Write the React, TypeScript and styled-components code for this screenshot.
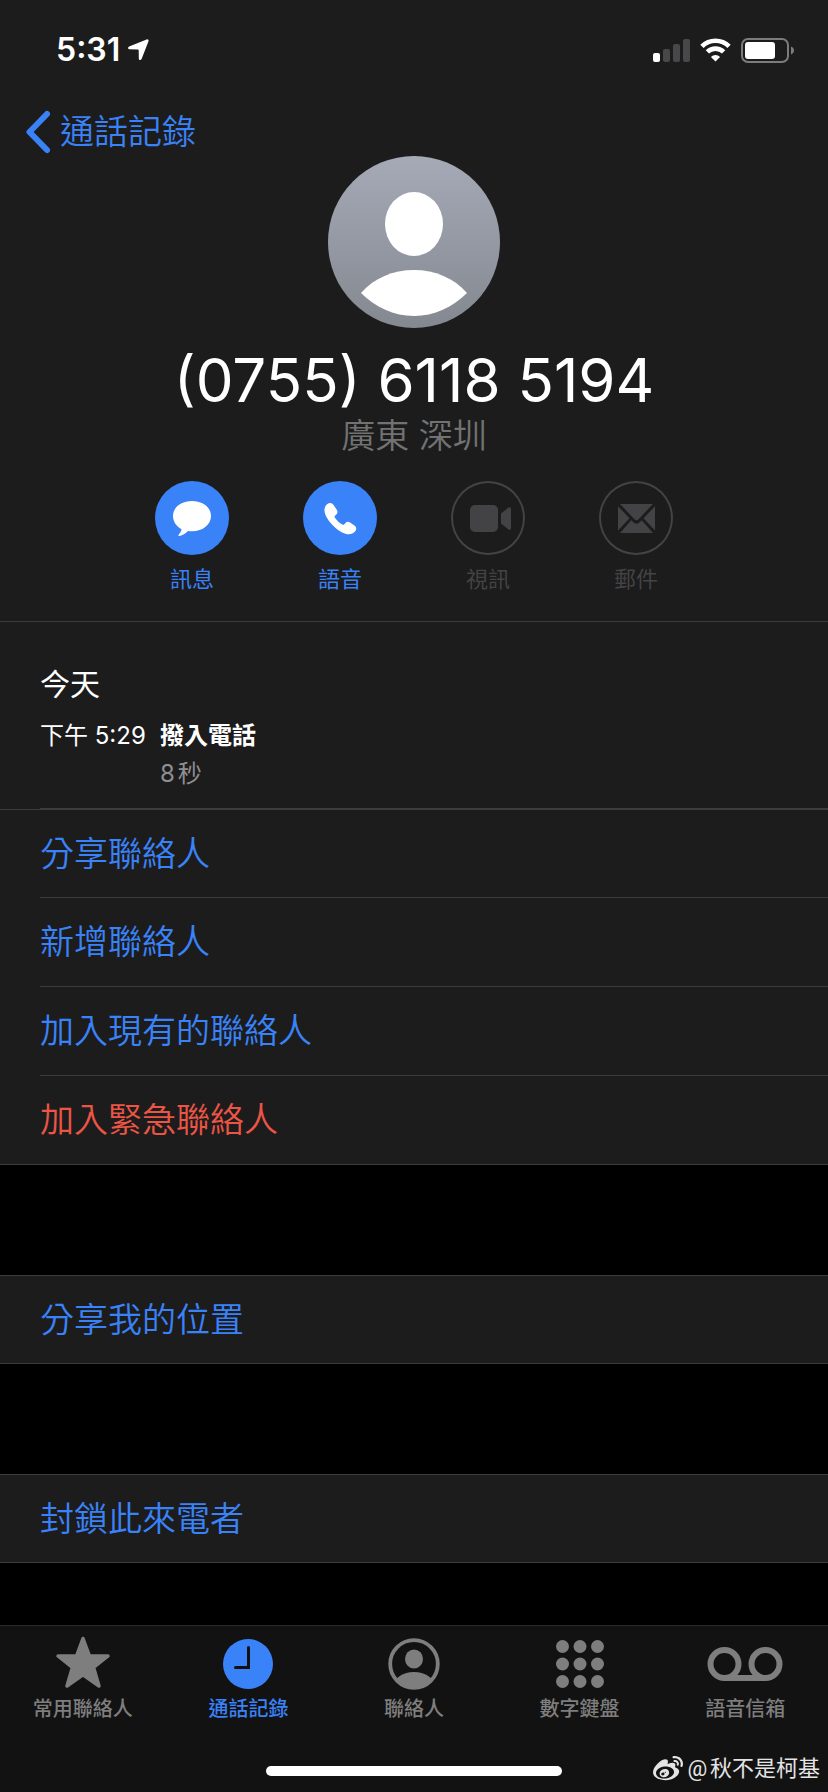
import React from "react";
import styled, { createGlobalStyle } from "styled-components";
import { FaWeibo } from "react-icons/fa";

const color = {
  panel: "#1c1c1c",
  bar: "#121212",
  line: "#3c3c3e",
  blue: "#3a82f7",
  red: "#eb5545",
  grey: "#727272",
  tab: "#7e7e7e",
  disabled: "#434345",
};

const GlobalStyle = createGlobalStyle`
  *, *::before, *::after { box-sizing: border-box; }
  body {
    margin: 0;
    background: #000;
    color: #fff;
    font-family: Inter, "Noto Sans CJK TC", sans-serif;
    text-autospace: normal;
  }
  button { font: inherit; color: inherit; background: none; border: 0; padding: 0; cursor: pointer; }
  button:disabled { cursor: default; }
  a { color: inherit; text-decoration: none; }
  h1, h2, p { margin: 0; font-weight: 400; }
  svg { display: block; flex: none; overflow: visible; }
`;

const Screen = styled.div`
  display: flex;
  flex-direction: column;
  min-height: 100vh;
`;

const Header = styled.header`
  background: ${color.panel};
  border-bottom: 1px solid ${color.line};
`;

const StatusBar = styled.div`
  display: flex;
  align-items: center;
  justify-content: space-between;
  height: 100px;
  padding: 0 34px 0 56px;
`;

const Clock = styled.div`
  display: flex;
  align-items: center;
  gap: 8px;
  font-size: 32px;
  font-weight: 600;
  line-height: 40px;
`;

const StatusIcons = styled.div`
  display: flex;
  align-items: center;
  gap: 10px;
`;

const NavBar = styled.nav`
  display: flex;
  height: 56px;
  padding-left: 26px;
`;

const BackLink = styled.a`
  display: flex;
  align-items: center;
  gap: 10px;
  height: 64px;
  color: ${color.blue};
  font-size: 34px;
  font-weight: 350;
  line-height: 48px;
`;

const Profile = styled.section`
  display: flex;
  flex-direction: column;
  align-items: center;
  padding-bottom: 26px;
`;

const PhoneNumber = styled.h1`
  margin-top: 16px;
  font-size: 60px;
  line-height: 72px;
`;

const Region = styled.p`
  color: ${color.grey};
  font-size: 34px;
  font-weight: 350;
  line-height: 40px;
`;

const Actions = styled.div`
  display: flex;
  gap: 74px;
  margin-top: 25px;
`;

const ActionButton = styled.button`
  display: flex;
  flex-direction: column;
  align-items: center;
  gap: 8px;
  width: 74px;
  color: ${color.blue};
  font-size: 22px;
  line-height: 32px;
  &:disabled { color: ${color.disabled}; }
`;

const Disc = styled.span<{ $outlined?: boolean }>`
  width: 74px;
  height: 74px;
  border-radius: 50%;
  color: ${(p) => (p.$outlined ? color.disabled : "#fff")};
  background: ${(p) => (p.$outlined ? "transparent" : color.blue)};
  box-shadow: ${(p) => (p.$outlined ? `inset 0 0 0 2px ${color.disabled}` : "none")};
`;

const History = styled.section`
  padding-left: 40px;
  background: ${color.panel};
`;

const HistoryBody = styled.div`
  padding: 40px 0 16px;
  border-bottom: 1px solid ${color.line};
`;

const Day = styled.h2`
  font-size: 30px;
  line-height: 44px;
`;

const CallEntry = styled.div`
  display: grid;
  grid-template-columns: 120px 1fr;
  row-gap: 2px;
  margin-top: 12px;
  font-size: 24px;
  line-height: 36px;
`;

const CallKind = styled.strong`
  font-weight: 600;
`;

const Duration = styled.span`
  grid-column: 2;
  color: #8e8e93;
`;

const Group = styled.ul<{ $spaced?: boolean }>`
  list-style: none;
  margin: ${(p) => (p.$spaced ? "110px 0 0" : "0")};
  padding: 0;
  background: ${color.panel};
  border: solid ${color.line};
  border-width: 1px 0;
`;

const ItemButton = styled.button<{ $danger?: boolean }>`
  display: block;
  width: 100%;
  height: 87px;
  color: ${(p) => (p.$danger ? color.red : color.blue)};
  font-size: 34px;
  font-weight: 350;
  line-height: 48px;
  text-align: left;
`;

const Item = styled.li`
  padding-left: 40px;

  & + & ${ItemButton} {
    height: 89px;
    border-top: 1px solid ${color.line};
  }
`;

const Footer = styled.footer`
  position: sticky;
  bottom: 0;
  margin-top: auto;
  background: ${color.bar};
  border-top: 1px solid #2a2a2a;
`;

const Tabs = styled.nav`
  display: grid;
  grid-template-columns: repeat(5, 1fr);
  height: 140px;
  padding-top: 11px;
`;

const Tab = styled.a<{ $active?: boolean }>`
  display: flex;
  flex-direction: column;
  align-items: center;
  gap: 6px;
  height: 90px;
  color: ${(p) => (p.$active ? color.blue : color.tab)};
  font-size: 20px;
  font-weight: 500;
  line-height: 28px;
`;

const HomeIndicator = styled.div`
  width: 296px;
  height: 10px;
  margin: 0 auto 16px;
  border-radius: 5px;
  background: #fff;
`;

const Watermark = styled.div`
  position: absolute;
  right: 8px;
  bottom: 8px;
  display: flex;
  align-items: center;
  gap: 4px;
  color: #e4e4e4;
  font-size: 22px;
  line-height: 30px;
  font-family: Roboto, "Noto Sans CJK SC", sans-serif;
`;

const LocationArrow = () => (
  <svg width="21" height="22" viewBox="0 0 21 22" fill="currentColor">
    <path d="M18.600.400C20 .100 20.900 1 20.500 2.300L13.600 20C13 21.600 10.900 21.400 10.800 19.800L10.700 11.200C10.700 10.700 10.400 10.400 9.900 10.400L1.400 10.200C-.200 10.100-.400 8 1.100 7.400Z" />
  </svg>
);

const Signal = () => (
  <svg width="37" height="23" viewBox="0 0 37 23">
    <rect x="0" y="14" width="7" height="9" rx="2" fill="#fff" />
    <rect x="10" y="10" width="7" height="13" rx="2" fill="#48484a" />
    <rect x="20" y="5" width="7" height="18" rx="2" fill="#48484a" />
    <rect x="30" y="0" width="7" height="23" rx="2" fill="#48484a" />
  </svg>
);

const Wifi = () => (
  <svg width="31" height="24" viewBox="0 0 32 24">
    <g fill="none" stroke="#fff" strokeWidth="4.800">
      <path d="M2 8.200A20 20 0 0 1 30 8.200" />
      <path d="M7.600 14A12 12 0 0 1 24.400 14" />
    </g>
    <path d="M16 23.800L11.300 19.200A6.700 6.700 0 0 1 20.700 19.200Z" fill="#fff" />
  </svg>
);

const Battery = () => (
  <svg width="53" height="25" viewBox="0 0 53 25">
    <rect x="1" y="1" width="46" height="23" rx="6" fill="none" stroke="#7c7c7e" strokeWidth="2" />
    <rect x="4" y="4" width="30" height="17" rx="3" fill="#fff" />
    <path d="M50 8.500C52 9.300 53 10.700 53 12.500S52 15.700 50 16.500Z" fill="#7c7c7e" />
  </svg>
);

const BackChevron = () => (
  <svg width="24" height="42" viewBox="0 0 24 42">
    <path d="M21 3L3.500 21L21 39" fill="none" stroke="currentColor" strokeWidth="6" strokeLinecap="round" strokeLinejoin="round" />
  </svg>
);

const Avatar = () => (
  <svg width="172" height="172" viewBox="0 0 172 172" role="img" aria-label="聯絡人頭像">
    <defs>
      <linearGradient id="avatar" x1="0" y1="0" x2="0" y2="1">
        <stop offset="0" stopColor="#a6aab7" />
        <stop offset="1" stopColor="#848890" />
      </linearGradient>
    </defs>
    <circle cx="86" cy="86" r="86" fill="url(#avatar)" />
    <ellipse cx="86" cy="68" rx="29" ry="32" fill="#fff" />
    <path d="M33 137C46 122 65 114 86 114S126 122 139 137C125 151 106 160 86 160S47 151 33 137Z" fill="#fff" />
  </svg>
);

const MessageIcon = () => (
  <svg width="74" height="74" viewBox="0 0 74 74" fill="currentColor">
    <path d="M37 20C48 20 56 26.500 56 35S48 50.300 37 50.300C35.500 50.300 34.300 50.300 33 50C30.500 52.500 27.500 54.500 24.500 55C23.300 55.200 23 54.200 23.800 53.400C25.300 51.900 26.200 50.200 26.500 48.200C21.500 45.400 18 40.800 18 35C18 26.500 26 20 37 20Z" />
  </svg>
);

const PhoneIcon = () => (
  <svg width="74" height="74" viewBox="0 0 74 74" fill="currentColor">
    <path d="M24 23.200C26.500 21.200 29 21.500 30.600 24L33.800 28.800C34.900 30.800 34.700 32.100 33.300 33.500L32.200 34.600C31.500 35.300 31.400 36 31.900 36.700C34 39.700 36.400 41.900 39.300 43.600C40 44 40.700 43.900 41.300 43.300L42.500 42C43.800 40.700 45.200 40.500 47 41.500L51.500 44.600C53.700 46.200 53.800 48.500 52 50.600C47.300 56 38.500 52.700 31 45.500C23.500 38.300 18 28.500 24 23.200Z" />
  </svg>
);

const VideoIcon = () => (
  <svg width="74" height="74" viewBox="0 0 74 74" fill="currentColor">
    <rect x="19" y="24" width="28" height="27" rx="5" />
    <path d="M50 32.500L57.200 26.800C58.700 25.700 60 26.300 60 28V47C60 48.700 58.700 49.300 57.200 48.200L50 42.500Z" />
  </svg>
);

const MailIcon = () => (
  <svg width="74" height="74" viewBox="0 0 74 74" fill="currentColor">
    <path d="M21 23H54L39.500 38.200C38 39.700 37 39.700 35.500 38.200Z" />
    <path d="M19 25.200L30.500 37.300L19 49.500Z" />
    <path d="M56 25.200L44.500 37.300L56 49.500Z" />
    <path d="M21 52L32.300 39.300L34 41C36.300 43.200 38.700 43.200 41 41L42.700 39.300L54 52Z" />
  </svg>
);

const StarIcon = () => (
  <svg width="56" height="52" viewBox="0 0 56 52">
    <path d="M28 1.500L34.500 19H53L38.600 30.500L44 49L28 37.800L12 49L17.400 30.500L3 19H21.500Z" fill="currentColor" stroke="currentColor" strokeWidth="3.500" strokeLinejoin="round" />
  </svg>
);

const RecentsIcon = () => (
  <svg width="52" height="52" viewBox="0 0 52 52">
    <circle cx="26" cy="27" r="25" fill="currentColor" />
    <path d="M26.500 10.500V30.500H13.500" fill="none" stroke={color.bar} strokeWidth="3" strokeLinecap="round" />
  </svg>
);

const ContactsIcon = () => (
  <svg width="52" height="52" viewBox="0 0 52 52">
    <clipPath id="contact-ring"><circle cx="26" cy="27" r="24" /></clipPath>
    <circle cx="26" cy="27" r="23.800" fill="none" stroke="currentColor" strokeWidth="3.800" />
    <ellipse cx="26" cy="22" rx="9" ry="9.500" fill="currentColor" />
    <ellipse cx="26" cy="52" rx="22" ry="17" fill="currentColor" clipPath="url(#contact-ring)" />
  </svg>
);

const KeypadIcon = () => (
  <svg width="52" height="52" viewBox="0 0 52 52" fill="currentColor">
    {[9.5, 27, 44.5].map((y) => [8.5, 26, 43.5].map((x) => <circle key={`${x}-${y}`} cx={x} cy={y} r="6.500" />))}
  </svg>
);

const VoicemailIcon = () => (
  <svg width="76" height="52" viewBox="0 0 76 52" fill="none" stroke="currentColor" strokeWidth="6">
    <circle cx="17.500" cy="27" r="14" />
    <circle cx="58.500" cy="27" r="14" />
    <path d="M17.500 41H58.500" />
  </svg>
);

const actions = [
  { label: "訊息", icon: <MessageIcon /> },
  { label: "語音", icon: <PhoneIcon /> },
  { label: "視訊", icon: <VideoIcon />, disabled: true },
  { label: "郵件", icon: <MailIcon />, disabled: true },
];

const contactItems = [
  { label: "分享聯絡人" },
  { label: "新增聯絡人" },
  { label: "加入現有的聯絡人" },
  { label: "加入緊急聯絡人", danger: true },
];

const tabs = [
  { label: "常用聯絡人", icon: <StarIcon /> },
  { label: "通話記錄", icon: <RecentsIcon />, active: true },
  { label: "聯絡人", icon: <ContactsIcon /> },
  { label: "數字鍵盤", icon: <KeypadIcon /> },
  { label: "語音信箱", icon: <VoicemailIcon /> },
];

export default function App() {
  return (
    <Screen lang="zh-Hant">
      <GlobalStyle />
      <Header>
        <StatusBar>
          <Clock>
            5:31
            <LocationArrow />
          </Clock>
          <StatusIcons>
            <Signal />
            <Wifi />
            <Battery />
          </StatusIcons>
        </StatusBar>
        <NavBar>
          <BackLink href="#recents">
            <BackChevron />
            通話記錄
          </BackLink>
        </NavBar>
        <Profile>
          <Avatar />
          <PhoneNumber>(0755) 6118 5194</PhoneNumber>
          <Region>廣東 深圳</Region>
          <Actions>
            {actions.map((a) => (
              <ActionButton key={a.label} type="button" disabled={a.disabled}>
                <Disc $outlined={a.disabled}>{a.icon}</Disc>
                {a.label}
              </ActionButton>
            ))}
          </Actions>
        </Profile>
      </Header>
      <main>
        <History>
          <HistoryBody>
            <Day>今天</Day>
            <CallEntry>
              <span>下午 5:29</span>
              <CallKind>撥入電話</CallKind>
              <Duration>8秒</Duration>
            </CallEntry>
          </HistoryBody>
        </History>
        <Group>
          {contactItems.map((item) => (
            <Item key={item.label}>
              <ItemButton type="button" $danger={item.danger}>
                {item.label}
              </ItemButton>
            </Item>
          ))}
        </Group>
        <Group $spaced>
          <Item>
            <ItemButton type="button">分享我的位置</ItemButton>
          </Item>
        </Group>
        <Group $spaced>
          <Item>
            <ItemButton type="button">封鎖此來電者</ItemButton>
          </Item>
        </Group>
      </main>
      <Footer>
        <Tabs>
          {tabs.map((t) => (
            <Tab key={t.label} href={`#${t.label}`} $active={t.active} aria-current={t.active ? "page" : undefined}>
              {t.icon}
              {t.label}
            </Tab>
          ))}
        </Tabs>
        <HomeIndicator />
        <Watermark>
          <FaWeibo size={30} />
          @秋不是柯基
        </Watermark>
      </Footer>
    </Screen>
  );
}
